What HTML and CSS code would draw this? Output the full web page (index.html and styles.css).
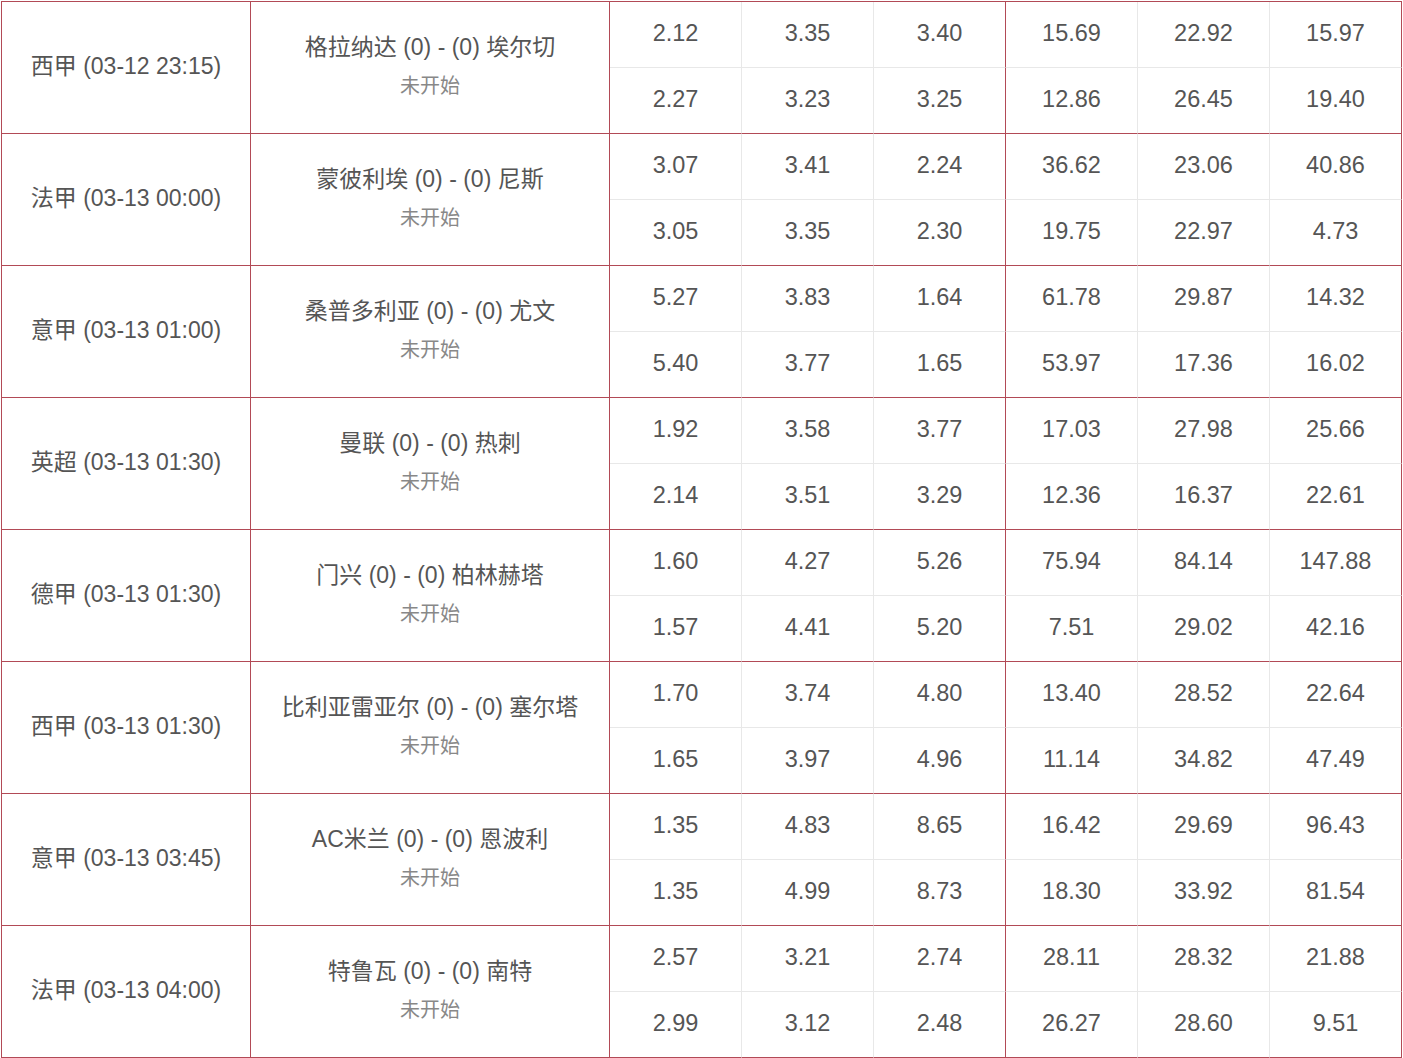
FILE: index.html
```html
<!DOCTYPE html>
<html lang="zh-CN">
<head>
<meta charset="utf-8">
<title>赔率</title>
<link rel="stylesheet" href="styles.css">
</head>
<body>
<div class="odds-grid">
<div class="cell league">西甲 (03-12 23:15)</div>
<div class="cell match"><div class="teams">格拉纳达 (0) - (0) 埃尔切</div><div class="status">未开始</div></div>
<div class="cell odd">2.12</div><div class="cell odd">3.35</div><div class="cell odd sep">3.40</div><div class="cell odd">15.69</div><div class="cell odd">22.92</div><div class="cell odd sep">15.97</div>
<div class="cell odd last">2.27</div><div class="cell odd last">3.23</div><div class="cell odd last sep">3.25</div><div class="cell odd last">12.86</div><div class="cell odd last">26.45</div><div class="cell odd last sep">19.40</div>

<div class="cell league">法甲 (03-13 00:00)</div>
<div class="cell match"><div class="teams">蒙彼利埃 (0) - (0) 尼斯</div><div class="status">未开始</div></div>
<div class="cell odd">3.07</div><div class="cell odd">3.41</div><div class="cell odd sep">2.24</div><div class="cell odd">36.62</div><div class="cell odd">23.06</div><div class="cell odd sep">40.86</div>
<div class="cell odd last">3.05</div><div class="cell odd last">3.35</div><div class="cell odd last sep">2.30</div><div class="cell odd last">19.75</div><div class="cell odd last">22.97</div><div class="cell odd last sep">4.73</div>

<div class="cell league">意甲 (03-13 01:00)</div>
<div class="cell match"><div class="teams">桑普多利亚 (0) - (0) 尤文</div><div class="status">未开始</div></div>
<div class="cell odd">5.27</div><div class="cell odd">3.83</div><div class="cell odd sep">1.64</div><div class="cell odd">61.78</div><div class="cell odd">29.87</div><div class="cell odd sep">14.32</div>
<div class="cell odd last">5.40</div><div class="cell odd last">3.77</div><div class="cell odd last sep">1.65</div><div class="cell odd last">53.97</div><div class="cell odd last">17.36</div><div class="cell odd last sep">16.02</div>

<div class="cell league">英超 (03-13 01:30)</div>
<div class="cell match"><div class="teams">曼联 (0) - (0) 热刺</div><div class="status">未开始</div></div>
<div class="cell odd">1.92</div><div class="cell odd">3.58</div><div class="cell odd sep">3.77</div><div class="cell odd">17.03</div><div class="cell odd">27.98</div><div class="cell odd sep">25.66</div>
<div class="cell odd last">2.14</div><div class="cell odd last">3.51</div><div class="cell odd last sep">3.29</div><div class="cell odd last">12.36</div><div class="cell odd last">16.37</div><div class="cell odd last sep">22.61</div>

<div class="cell league">德甲 (03-13 01:30)</div>
<div class="cell match"><div class="teams">门兴 (0) - (0) 柏林赫塔</div><div class="status">未开始</div></div>
<div class="cell odd">1.60</div><div class="cell odd">4.27</div><div class="cell odd sep">5.26</div><div class="cell odd">75.94</div><div class="cell odd">84.14</div><div class="cell odd sep">147.88</div>
<div class="cell odd last">1.57</div><div class="cell odd last">4.41</div><div class="cell odd last sep">5.20</div><div class="cell odd last">7.51</div><div class="cell odd last">29.02</div><div class="cell odd last sep">42.16</div>

<div class="cell league">西甲 (03-13 01:30)</div>
<div class="cell match"><div class="teams">比利亚雷亚尔 (0) - (0) 塞尔塔</div><div class="status">未开始</div></div>
<div class="cell odd">1.70</div><div class="cell odd">3.74</div><div class="cell odd sep">4.80</div><div class="cell odd">13.40</div><div class="cell odd">28.52</div><div class="cell odd sep">22.64</div>
<div class="cell odd last">1.65</div><div class="cell odd last">3.97</div><div class="cell odd last sep">4.96</div><div class="cell odd last">11.14</div><div class="cell odd last">34.82</div><div class="cell odd last sep">47.49</div>

<div class="cell league">意甲 (03-13 03:45)</div>
<div class="cell match"><div class="teams">AC米兰 (0) - (0) 恩波利</div><div class="status">未开始</div></div>
<div class="cell odd">1.35</div><div class="cell odd">4.83</div><div class="cell odd sep">8.65</div><div class="cell odd">16.42</div><div class="cell odd">29.69</div><div class="cell odd sep">96.43</div>
<div class="cell odd last">1.35</div><div class="cell odd last">4.99</div><div class="cell odd last sep">8.73</div><div class="cell odd last">18.30</div><div class="cell odd last">33.92</div><div class="cell odd last sep">81.54</div>

<div class="cell league">法甲 (03-13 04:00)</div>
<div class="cell match"><div class="teams">特鲁瓦 (0) - (0) 南特</div><div class="status">未开始</div></div>
<div class="cell odd">2.57</div><div class="cell odd">3.21</div><div class="cell odd sep">2.74</div><div class="cell odd">28.11</div><div class="cell odd">28.32</div><div class="cell odd sep">21.88</div>
<div class="cell odd last">2.99</div><div class="cell odd last">3.12</div><div class="cell odd last sep">2.48</div><div class="cell odd last">26.27</div><div class="cell odd last">28.60</div><div class="cell odd last sep">9.51</div>
</div>
</body>
</html>
```

FILE: styles.css
```css
html, body {
  margin: 0;
  padding: 0;
  background: #ffffff;
}

body {
  padding: 1px 0 0 1px;
}

.odds-grid {
  display: grid;
  grid-template-columns: 249px 359px repeat(6, 132px);
  grid-auto-rows: 66px;
  width: 1401px;
  box-sizing: border-box;
  border-top: 1px solid #b24a56;
  border-left: 1px solid #b24a56;
  font-family: "Liberation Sans", "Noto Sans CJK SC", sans-serif;
  color: #555555;
}

.cell {
  box-sizing: border-box;
  display: flex;
  flex-direction: column;
  align-items: center;
  justify-content: center;
  text-align: center;
  border-right: 1px solid #e8e8e8;
  border-bottom: 1px solid #e8e8e8;
}

.odd {
  font-size: 23.5px;
  line-height: 30px;
  padding-bottom: 4px;
}

.odd.sep {
  border-right-color: #b24a56;
}

.odd.last {
  border-bottom-color: #b24a56;
}

.league,
.match {
  grid-row: span 2;
  font-size: 23px;
  border-right-color: #b24a56;
  border-bottom-color: #b24a56;
}

.league {
  line-height: 36px;
  padding-bottom: 3px;
}

.match {
  padding-bottom: 3px;
}

.teams {
  line-height: 36px;
}

.status {
  margin-top: 3px;
  line-height: 36px;
  font-size: 20px;
  color: #888888;
}
```
